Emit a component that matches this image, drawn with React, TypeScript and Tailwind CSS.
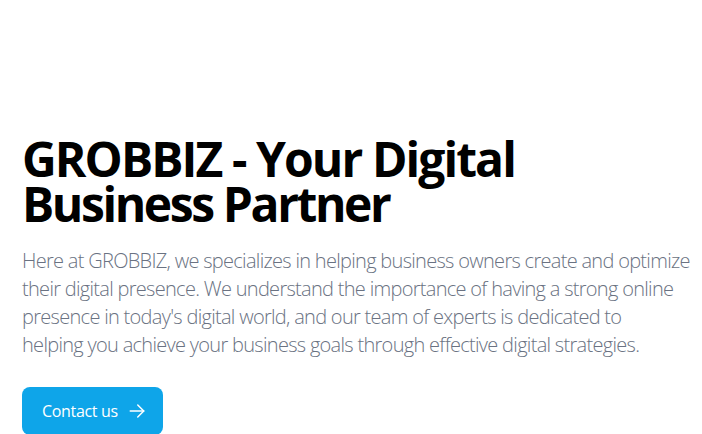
import React from "react";

export default function App() {
  return (
    <div className="min-h-screen bg-white" style={{ fontFamily: '"Open Sans", "Noto Sans", sans-serif' }}>
      <section className="pl-[22px] pr-0 pt-[136px]">
        <h1 className="text-[48px] font-bold leading-[45px] text-black tracking-[-0.04em]">
          GROBBIZ - Your Digital
          <br />
          <span className="tracking-[-0.05em]">Business Partner</span>
        </h1>
        <p className="mt-[21px] text-[20px] font-light leading-[28px] text-gray-500 tracking-[-0.035em]">
          Here at GROBBIZ, we specializes in helping business owners create and optimize
          <br />
          their digital presence. We understand the importance of having a strong online
          <br />
          presence in today's digital world, and our team of experts is dedicated to
          <br />
          helping you achieve your business goals through effective digital strategies.
        </p>
        <button className="mt-[28px] flex items-center gap-[10px] rounded-lg bg-[#0ea5e9] py-3 pl-5 pr-[17px] text-[16px] leading-6 text-white tracking-[-0.02em]">
          Contact us
          <svg width="18" height="18" viewBox="0 0 24 24" fill="none" stroke="currentColor" strokeWidth="2" strokeLinecap="round" strokeLinejoin="round">
            <path d="M3 12h18" />
            <path d="M13 4l8 8-8 8" />
          </svg>
        </button>
      </section>
    </div>
  );
}
